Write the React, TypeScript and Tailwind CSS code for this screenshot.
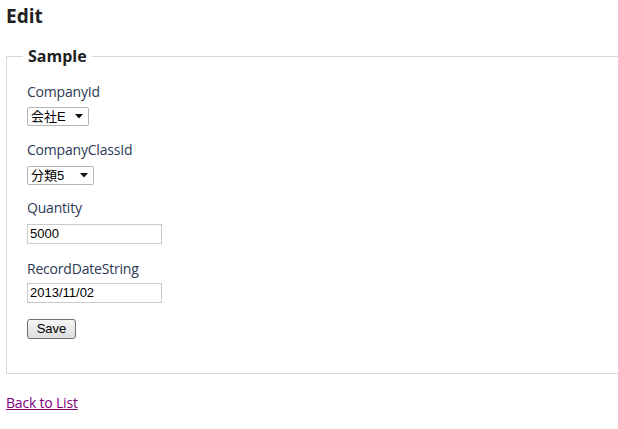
const labelCls = "block text-[14px] leading-[18px] text-[#2b3a55] font-['Open_Sans',sans-serif] tracking-[-0.2px]"

function FakeSelect({ value, width }: { value: string; width: string }) {
  return (
    <div
      className={`flex h-[19px] items-center justify-between rounded-[2px] border border-[#b5b5b5] bg-white pl-[3px] pr-[5px] text-[13px] text-black font-['Liberation_Sans','Noto_Sans_CJK_JP',sans-serif] ${width}`}
    >
      <span className="leading-none">{value}</span>
      <svg width="8" height="5" viewBox="0 0 8 5">
        <polygon points="0,0 8,0 4,4.5" fill="#111" />
      </svg>
    </div>
  )
}

function TextBox({ value }: { value: string }) {
  return (
    <input
      type="text"
      defaultValue={value}
      className="h-[20px] w-[135px] border border-[#c9c9c9] bg-white px-[2px] text-[13px] text-black font-['Liberation_Sans',sans-serif] outline-none"
    />
  )
}

export default function App() {
  return (
    <div className="min-h-[429px] w-[618px] overflow-hidden bg-white text-[#333] font-['Open_Sans',sans-serif]">
      <div className="px-[6px] pt-[4px]">
        <h2 className="text-[19px] font-bold leading-[24px] text-[#222]">Edit</h2>

        <fieldset className="mt-[18px] w-[640px] border border-[#d8d8d8] pl-[20px] pt-[17px] pb-[34px]">
          <legend className="ml-[-4px] px-[5px] text-[16px] font-bold leading-[20px] text-[#222]">Sample</legend>

          <div className="flex flex-col">
            <label className={labelCls}>CompanyId</label>
            <div className="mt-[6px]">
              <FakeSelect value="会社E" width="w-[62px]" />
            </div>

            <label className={`${labelCls} mt-[15px]`}>CompanyClassId</label>
            <div className="mt-[7px]">
              <FakeSelect value="分類5" width="w-[67px]" />
            </div>

            <label className={`${labelCls} mt-[14px]`}>Quantity</label>
            <div className="mt-[3px]">
              <TextBox value="5000" />
            </div>

            <label className={`${labelCls} mt-[16px]`}>RecordDateString</label>
            <div className="mt-[1px]">
              <TextBox value="2013/11/02" />
            </div>

            <div className="mt-[12px]">
              <button className="h-[20px] w-[49px] rounded-[3px] border border-[#707070] bg-gradient-to-b from-[#f6f6f6] to-[#dcdcdc] text-[13px] leading-none text-black font-['Liberation_Sans',sans-serif]">
                Save
              </button>
            </div>
          </div>
        </fieldset>

        <div className="mt-[16px]">
          <a href="#" className="text-[14px] text-[#800080] underline font-['Open_Sans',sans-serif] tracking-[-0.2px]">
            Back to List
          </a>
        </div>
      </div>
    </div>
  )
}
